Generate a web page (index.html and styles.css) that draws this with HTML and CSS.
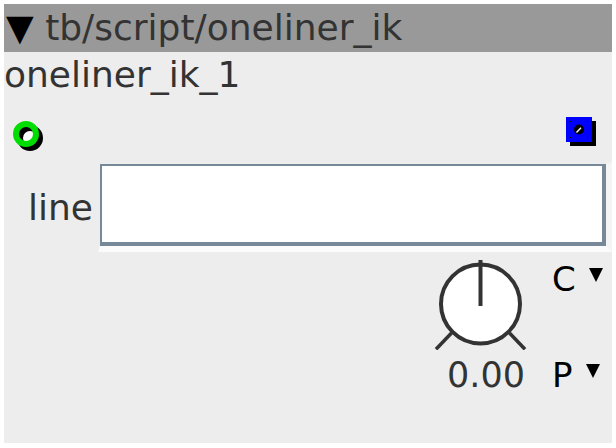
FILE: index.html
```html
<!DOCTYPE html>
<html>
<head>
<meta charset="utf-8">
<link rel="stylesheet" href="styles.css">
</head>
<body>
<div class="panel">
  <div class="header"><span class="caret">▼</span> tb/script/oneliner_ik</div>
  <div class="name">oneliner_ik_1</div>
  <div class="ports">
    <svg class="port-in" width="36" height="36" viewBox="0 0 36 36">
      <circle cx="18" cy="19" r="10" fill="#fff" stroke="#000" stroke-width="6"/>
      <circle cx="14" cy="15" r="10" fill="none" stroke="#00dd00" stroke-width="6"/>
    </svg>
    <svg class="port-out" width="30" height="29" viewBox="0 0 30 29">
      <rect x="4" y="4" width="26" height="25" fill="#000"/>
      <rect x="0" y="0" width="26" height="25" fill="#0000ff"/>
      <rect x="4" y="4" width="1" height="1" fill="#000"/>
      <rect x="21" y="4" width="1" height="1" fill="#000"/>
      <rect x="4" y="20" width="1" height="1" fill="#000"/>
      <rect x="21" y="20" width="1" height="1" fill="#000"/>
      <circle cx="13" cy="12.5" r="5" fill="#000"/>
      <path d="M10 15 L14.5 10.3 L15.5 11.3 L11 16 Z" fill="#fff"/>
    </svg>
  </div>
  <div class="field-row">
    <span class="label">line</span>
    <div class="field-wrap"><div class="field"></div></div>
  </div>
  <div class="controls">
    <div class="knob">
      <svg width="96" height="92" viewBox="0 0 96 92">
        <line x1="19.5" y1="75" x2="4" y2="91.3" stroke="#333" stroke-width="3.5"/>
        <line x1="77.5" y1="75" x2="93" y2="91.3" stroke="#333" stroke-width="3.5"/>
        <circle cx="48.5" cy="46" r="39.5" fill="#fff" stroke="#333" stroke-width="4"/>
        <line x1="48.5" y1="2" x2="48.5" y2="48" stroke="#333" stroke-width="4"/>
      </svg>
      <div class="value">0.00</div>
    </div>
    <div class="selects">
      <div class="sel">C<svg class="tri" width="14" height="14" viewBox="0 0 14 14"><polygon points="0,0 14,0 7,14" fill="#000"/></svg></div>
      <div class="sel sel-p">P<svg class="tri" width="14" height="14" viewBox="0 0 14 14"><polygon points="0,0 14,0 7,14" fill="#000"/></svg></div>
    </div>
  </div>
</div>
</body>
</html>
```
FILE: styles.css
```css
html, body {
  margin: 0;
  padding: 0;
  background: #ffffff;
}
body {
  padding: 4px;
  font-family: "DejaVu Sans", sans-serif;
}
.panel {
  width: 608px;
  height: 439px;
  background: #ededed;
  color: #333333;
}
.header {
  height: 48px;
  line-height: 48px;
  padding-left: 2px;
  background: #999999;
  font-size: 36px;
  white-space: nowrap;
}
.caret {
  color: #000;
}
.name {
  font-size: 36px;
  line-height: 46px;
  height: 46px;
}
.ports {
  height: 64px;
  display: flex;
  justify-content: space-between;
  align-items: flex-start;
  padding: 0 16px 0 8px;
}
.port-in {
  margin-top: 21px;
}
.port-out {
  margin-top: 19px;
}
.field-row {
  display: flex;
  align-items: flex-start;
  height: 90px;
  padding-left: 24px;
}
.label {
  font-size: 36px;
  line-height: 42px;
  margin-top: 25px;
  margin-right: 5px;
}
.field-wrap {
  border-style: solid;
  border-width: 2px 6px 6px 2px;
  border-color: transparent #f5f5f5 #fbfbfb transparent;
}
.field {
  width: 500px;
  height: 76px;
  background: #ffffff;
  border-style: solid;
  border-color: #778899;
  border-width: 2px 4px 4px 2px;
}
.controls {
  display: flex;
  justify-content: flex-end;
  padding-top: 6px;
}
.knob {
  width: 97px;
  margin-right: 23px;
}
.knob svg {
  display: block;
}
.value {
  font-size: 35px;
  line-height: 40px;
  margin-top: 5px;
  text-align: right;
  padding-right: 4px;
}
.selects {
  width: 60px;
  color: #000;
  font-size: 34px;
  line-height: 40px;
}
.sel {
  display: flex;
  align-items: flex-start;
  margin-top: 1px;
}
.sel-p {
  margin-top: 56px;
}
.tri {
  margin-left: 13px;
  margin-top: 9px;
}
```
